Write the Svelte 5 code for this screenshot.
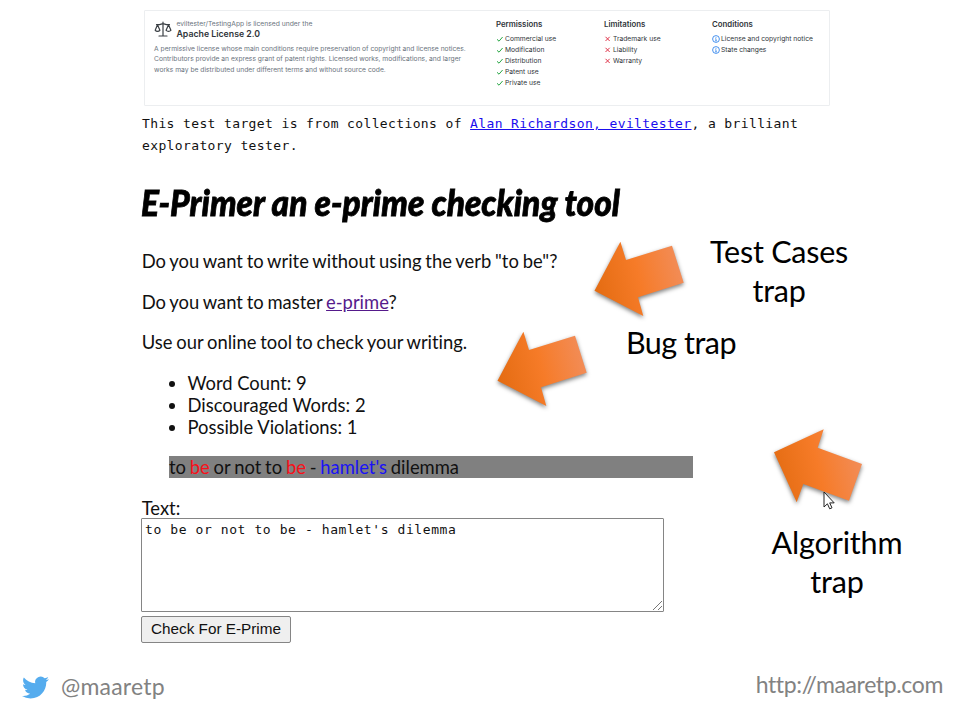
<script>
  const lists = [
    { title: 'Permissions', kind: 'yes', items: ['Commercial use', 'Modification', 'Distribution', 'Patent use', 'Private use'] },
    { title: 'Limitations', kind: 'no', items: ['Trademark use', 'Liability', 'Warranty'] },
    { title: 'Conditions', kind: 'info', items: ['License and copyright notice', 'State changes'] }
  ];
  const down = '4.5,55.7 30.4,6.7 36,25 82,10.7 93.7,47.7 48,62.3 53.3,81';
  const up = '4,27.3 53.7,4.3 47.7,22.7 92,39 79,75.7 33.3,59 26.7,77.3';
  const arrows = [
    { x: 590, y: 235, points: down },
    { x: 493, y: 325, points: down },
    { x: 770, y: 425, points: up }
  ];
  const stats = ['Word Count: 9', 'Discouraged Words: 2', 'Possible Violations: 1'];
</script>

<div class="slide">
  <main>
    <section class="license">
      <div class="about">
        <div class="name">
          <svg width="18" height="17" viewBox="0 0 18 17" fill="none" stroke="#3a3f44" stroke-width="1.2" stroke-linecap="round" stroke-linejoin="round">
            <path d="M9 1.2V14.8M5 15h8M2.5 3.6h3L9 2.6l3.500 1h3M3.500 3.800 1.200 9.300c1.200 1.300 3.500 1.300 4.700 0ZM14.500 3.800l-2.400 5.500c1.300 1.300 3.500 1.300 4.800 0Z" />
          </svg>
          <div>
            <div class="repo">eviltester/TestingApp is licensed under the</div>
            <div class="title">Apache License 2.0</div>
          </div>
        </div>
        <p class="summary">A permissive license whose main conditions require preservation of copyright and license notices.<br />Contributors provide an express grant of patent rights. Licensed works, modifications, and larger<br />works may be distributed under different terms and without source code.</p>
      </div>
      {#each lists as list}
        <div class="col">
          <h2>{list.title}</h2>
          {#each list.items as item}
            <div class="item {list.kind}">
              <svg viewBox="0 0 8 8" fill="none" stroke="currentColor">
                {#if list.kind === 'yes'}
                  <path d="M1 4.300 3 6.200 6.600 2" stroke-width="1" />
                {:else if list.kind === 'no'}
                  <path d="M1.500 1.800 5.700 6M5.700 1.800 1.500 6" stroke-width="1" />
                {:else}
                  <circle cx="4" cy="4" r="3.400" stroke-width=".8" />
                  <path d="M4 2v.8M3.400 3.700H4V5.800M3.200 5.800h1.600" stroke-width=".7" />
                {/if}
              </svg>
              <span>{item}</span>
            </div>
          {/each}
        </div>
      {/each}
    </section>

    <p class="intro">This test target is from collections of <a href="#author">Alan Richardson, eviltester</a>, a brilliant<br />exploratory tester.</p>

    <h1><span>E-Primer an e-prime checking tool</span></h1>
    <p class="para">Do you want to write without using the verb "to be"?</p>
    <p class="para">Do you want to master <a class="visited" href="#eprime">e-prime</a>?</p>
    <p class="para">Use our online tool to check your writing.</p>
    <ul>
      {#each stats as stat}<li>{stat}</li>{/each}
    </ul>
    <div class="result">to <span class="bad">be</span> or not to <span class="bad">be</span> - <span class="maybe">hamlet's</span> dilemma</div>
    <label for="text">Text:</label>
    <div class="field">
      <textarea id="text" spellcheck="false">to be or not to be - hamlet's dilemma</textarea>
      <svg class="grip" width="11" height="11" viewBox="0 0 11 11" stroke="#777" stroke-width="1"><path d="M1 10 10 1M6 10l4-4" /></svg>
    </div>
    <button>Check For E-Prime</button>
  </main>

  <svg class="defs" width="0" height="0">
    <defs>
      <linearGradient id="orange" x1="0" y1=".6" x2="1" y2=".4">
        <stop offset="0" stop-color="#e46c12" />
        <stop offset=".5" stop-color="#f67b28" />
        <stop offset="1" stop-color="#f28d59" />
      </linearGradient>
    </defs>
  </svg>
  {#each arrows as arrow}
    <svg class="arrow" style="left: {arrow.x}px; top: {arrow.y}px" width="100" height="90"><polygon points={arrow.points} fill="url(#orange)" /></svg>
  {/each}

  <div class="note cases">Test Cases<br />trap</div>
  <div class="note bug">Bug trap</div>
  <div class="note algo">Algorithm<br />trap</div>

  <svg class="cursor" width="12" height="19" viewBox="0 0 12 19"><path d="M1 1v15l3.400-3.200 2.300 5 2.300-1-2.300-4.900h4.500Z" fill="#fff" stroke="#222" stroke-width="1" /></svg>

  <footer>
    <div class="handle">
      <svg width="27" height="27" viewBox="0 0 24 24" fill="#55acee"><path d="M23.953 4.570a10 10 0 01-2.825.775 4.958 4.958 0 002.163-2.723c-.951.555-2.005.959-3.127 1.184a4.920 4.920 0 00-8.384 4.482C7.690 8.095 4.067 6.130 1.640 3.162a4.822 4.822 0 00-.666 2.475c0 1.710.870 3.213 2.188 4.096a4.904 4.904 0 01-2.228-.616v.060a4.923 4.923 0 003.946 4.827 4.996 4.996 0 01-2.212.085 4.936 4.936 0 004.604 3.417 9.867 9.867 0 01-6.102 2.105c-.390 0-.779-.023-1.170-.067a13.995 13.995 0 007.557 2.209c9.053 0 13.998-7.496 13.998-13.985 0-.210 0-.420-.015-.630A9.935 9.935 0 0024 4.590z" /></svg>
      <span>@maaretp</span>
    </div>
    <span class="site">http://maaretp.com</span>
  </footer>
</div>

<style>
  :global(body) { margin: 0; background: #fff; }
  .slide { position: relative; width: 960px; height: 720px; overflow: hidden; background: #fff; color: #111; font-family: Lato, sans-serif; font-variant-ligatures: none; display: flex; flex-direction: column; justify-content: space-between; }
  main { padding: 10px 0 0 141px; font-size: 18.4px; line-height: 22px; display: flex; flex-direction: column; align-items: flex-start; }
  .license { box-sizing: border-box; width: 686px; height: 96px; margin-left: 3px; border: 1px solid #eceef0; border-radius: 1px; display: flex; padding: 8px 0 0 9px; font-family: Inter, sans-serif; color: #30353a; }
  .about { width: 342px; }
  .name { display: flex; gap: 4.500px; height: 22px; }
  .name > svg { margin-top: 2px; }
  .repo { font-size: 6.750px; line-height: 9px; color: #6a737d; white-space: nowrap; }
  .title { font-size: 8.750px; line-height: 12px; font-weight: 600; white-space: nowrap; }
  .summary { margin: 3px 0 0; font-size: 6.720px; line-height: 10.300px; color: #6a737d; white-space: nowrap; }
  .col { width: 108px; }
  h2 { margin: 0 0 5px; font-size: 7.800px; line-height: 10px; font-weight: 600; }
  .item { display: flex; align-items: center; gap: 1px; height: 10.800px; font-size: 6.720px; white-space: nowrap; }
  .item svg { width: 8px; height: 8px; flex: none; }
  .yes svg { color: #28a745; }
  .no svg { color: #e0354b; }
  .info svg { color: #1976ea; }
  .intro { margin: 7px 0 0 1px; font: 13px/22px "DejaVu Sans Mono", monospace; letter-spacing: .375px; white-space: nowrap; }
  a { color: #1a0dee; text-decoration: underline; }
  a.visited { color: #551a8b; }
  h1 { margin: 22px 0 25.350px; height: 46px; line-height: 46px; font-size: 36px; font-weight: 900; font-style: italic; color: #000; white-space: nowrap; }
  h1 span { display: inline-block; transform: scaleX(.931); transform-origin: 0 50%; -webkit-text-stroke: .8px #000; }
  .para { margin: 0 0 18.400px .7px; word-spacing: -.9px; }
  ul { margin: 0 0 18.400px; padding-left: 46.500px; }
  .result { width: 524px; margin: 0 0 18.700px 28px; background: #808080; word-spacing: -.9px; }
  label { margin-left: .7px; }
  .bad { color: #f8101a; }
  .maybe { color: #1a12f5; }
  .field { position: relative; width: 523px; height: 95px; margin-top: -.650px; }
  textarea { box-sizing: border-box; display: block; width: 523px; height: 94px; border: 1px solid #858585; border-radius: 1px; padding: 1px 3px; margin: 0; resize: none; outline: none; font: 13px/20px "DejaVu Sans Mono", monospace; letter-spacing: .59px; color: #111; background: #fff; }
  .grip { position: absolute; right: 1px; bottom: 2px; }
  button { box-sizing: border-box; margin-top: 3px; width: 150px; height: 27px; padding: 0; border: 1px solid #858585; border-radius: 2px; background: #efefef; color: #111; font: 15.300px "Liberation Sans", Arial, sans-serif; white-space: nowrap; }
  .defs { position: absolute; }
  .arrow { position: absolute; overflow: visible; filter: drop-shadow(0 2px 2px rgba(0, 0, 0, .5)); }
  .note { position: absolute; font-size: 30.500px; line-height: 39px; text-align: center; color: #000; white-space: nowrap; letter-spacing: -.250px; }
  .cases { left: 699px; width: 160px; top: 232px; }
  .bug { left: 611px; width: 140px; top: 323px; letter-spacing: -.5px; }
  .algo { left: 757px; width: 160px; top: 523px; letter-spacing: -.150px; }
  .cursor { position: absolute; left: 823px; top: 491px; }
  footer { display: flex; justify-content: space-between; align-items: flex-start; height: 48px; padding: 0 17px 0 22px; color: #828282; font-size: 23px; line-height: 28px; }
  .handle { display: flex; gap: 12px; letter-spacing: .2px; }
  .handle svg { margin-top: 2px; }
  .site { margin-top: -2px; letter-spacing: -.360px; }
</style>
